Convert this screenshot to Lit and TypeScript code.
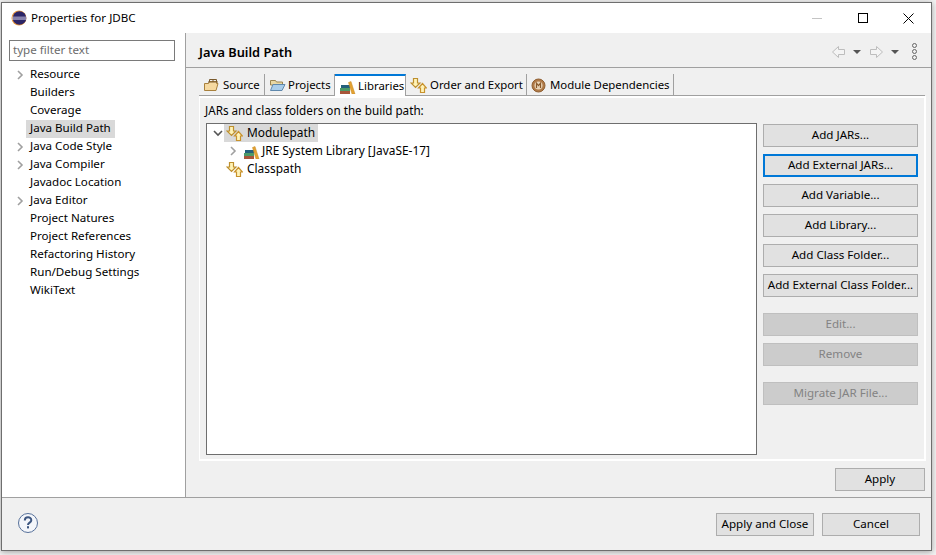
import { LitElement, html, css, svg } from 'lit';
import { customElement } from 'lit/decorators.js';

const chevronRight = html`<svg class="chev" width="10" height="10" viewBox="0 0 10 10"><path d="M3 1l4 4-4 4" fill="none" stroke="#a0a0a0" stroke-width="1.6"/></svg>`;
const chevronDown = html`<svg class="chev" width="10" height="10" viewBox="0 0 10 10"><path d="M1 3l4 4 4-4" fill="none" stroke="#555" stroke-width="1.6"/></svg>`;

const pathIcon = html`<svg class="icon" width="17" height="17" viewBox="0 0 17 17">
  <path d="M3.500 1.500h4v4.500h2.500l-4.500 4.500-4.500-4.500h2.500z" fill="#fff3b8" stroke="#bd8f2e" stroke-width="1.200"/>
  <path d="M10.500 15.500h4v-4.500h2l-4-4.500-4 4.500h2z" fill="#fff3b8" stroke="#c8922c" stroke-width="1.200"/>
</svg>`;

const libIcon = html`<svg class="icon" width="17" height="16" viewBox="0 0 17 16">
  <rect x="1" y="13" width="10" height="3" fill="#a8563a"/>
  <rect x="1" y="10" width="10" height="3" fill="#4d9a68"/>
  <rect x="2" y="7" width="9" height="3" fill="#24607c"/>
  <path d="M9.500 4.500l2.500-1 4 12.500h-3z" fill="#e3a233" stroke="#c78a24" stroke-width=".5"/>
</svg>`;

const sourceIcon = html`<svg class="icon" width="17" height="16" viewBox="0 0 17 16">
  <path d="M1.500 6.500h4l1-2h7v2h1.500l-2 7h-11.500z" fill="#f6d9a0" stroke="#a8803c"/>
  <path d="M6.500 2.500h7M6.500 5V2.500M10 5V2.500M13.500 5V2.500M5 5h10" fill="none" stroke="#7a5a2c"/>
</svg>`;

const projectIcon = html`<svg class="icon" width="17" height="16" viewBox="0 0 17 16">
  <path d="M1.500 3.500h5l1 1.500h6v3h-12z" fill="#e8d8a4" stroke="#9a8450"/>
  <path d="M1.500 13.500l2.500-6h12l-3 6z" fill="#a9cdea" stroke="#5f88ac"/>
</svg>`;

const moduleIcon = html`<svg class="icon" width="15" height="15" viewBox="0 0 15 15">
  <circle cx="7.500" cy="7.500" r="6.500" fill="#b07a48" stroke="#8f5e30"/>
  <circle cx="7.500" cy="7.500" r="4" fill="#e8d4b8"/>
  <path d="M5.500 10V5.200l2 2.400 2-2.400V10" fill="none" stroke="#8a5a2c" stroke-width="1.200"/>
</svg>`;

const eclipseIcon = html`<svg width="16" height="16" viewBox="0 0 16 16">
  <circle cx="8" cy="8" r="7.500" fill="#e8963c"/>
  <circle cx="8.500" cy="8" r="6.800" fill="#2c2566"/>
  <path d="M1 6.700h14.500v.9H1zM1 8.500h14.500v.9H1z" fill="#e4e0f0"/>
</svg>`;

const arrowLeft = svg`<path d="M7.500 1.500v3h6v5h-6v3l-6-5.500z" fill="#f4f4f4" stroke="#bdbdbd"/>`;
const arrowRight = svg`<path d="M6.500 1.500v3h-6v5h6v3l6-5.500z" fill="#f4f4f4" stroke="#bdbdbd"/>`;

const sideItems: { label: string; arrow?: boolean; selected?: boolean }[] = [
  { label: 'Resource', arrow: true },
  { label: 'Builders' },
  { label: 'Coverage' },
  { label: 'Java Build Path', selected: true },
  { label: 'Java Code Style', arrow: true },
  { label: 'Java Compiler', arrow: true },
  { label: 'Javadoc Location' },
  { label: 'Java Editor', arrow: true },
  { label: 'Project Natures' },
  { label: 'Project References' },
  { label: 'Refactoring History' },
  { label: 'Run/Debug Settings' },
  { label: 'WikiText' },
];

const tabs = [
  { label: 'Source', icon: sourceIcon, width: 66, gap: 3 },
  { label: 'Projects', icon: projectIcon, width: 70, gap: 2 },
  { label: 'Libraries', icon: libIcon, width: 71, gap: 2, active: true },
  { label: 'Order and Export', icon: pathIcon, width: 121, gap: 3 },
  { label: 'Module Dependencies', icon: moduleIcon, width: 147, gap: 4 },
];

const buttonGroups: { label: string; focus?: boolean; disabled?: boolean }[][] = [
  [
    { label: 'Add JARs...' },
    { label: 'Add External JARs...', focus: true },
    { label: 'Add Variable...' },
    { label: 'Add Library...' },
    { label: 'Add Class Folder...' },
    { label: 'Add External Class Folder...' },
  ],
  [
    { label: 'Edit...', disabled: true },
    { label: 'Remove', disabled: true },
  ],
  [{ label: 'Migrate JAR File...', disabled: true }],
];

@customElement('app-root')
export class AppRoot extends LitElement {
  static override styles = css`
    :host {
      display: block;
      width: 936px;
      height: 555px;
      box-sizing: border-box;
      padding: 2px 4px 4px 1px;
      background: #f3f3f3;
      overflow: hidden;
      font: 11.6px/16px 'Noto Sans', sans-serif;
      color: #000;
    }

    .window {
      height: 100%;
      box-sizing: border-box;
      display: flex;
      flex-direction: column;
      border: 1px solid #6e6e6e;
      background: #fff;
      box-shadow: 0 1px 6px rgba(0, 0, 0, 0.35);
    }

    .icon { flex: none; }

    .titlebar {
      height: 30px;
      flex: none;
      display: flex;
      align-items: center;
      padding-left: 9px;
      gap: 4px;
    }

    .titlebar .grow { flex: 1; }

    .win-btns {
      display: flex;
      height: 30px;
    }

    .win-btn {
      width: 45px;
      display: flex;
      align-items: center;
      justify-content: center;
    }

    .win-btn.max { width: 47px; }

    .body {
      flex: 1;
      min-height: 0;
      display: flex;
    }

    .side {
      width: 184px;
      flex: none;
      box-sizing: border-box;
      border-right: 1px solid #a0a0a0;
      background: #fff;
      padding: 7px 0 0 7px;
    }

    .filter {
      width: 166px;
      height: 21px;
      box-sizing: border-box;
      border: 1px solid #7a7a7a;
      padding-left: 3px;
      line-height: 18px;
      color: #6d6d6d;
      margin-bottom: 5px;
    }

    .side-row {
      height: 18px;
      display: flex;
      align-items: center;
    }

    .side-row .arrow {
      width: 17px;
      flex: none;
      display: flex;
      padding-left: 6px;
      box-sizing: border-box;
    }

    .side-row .arrow .chev { flex: none; }

    .side-row span {
      padding: 0 4px 2px;
      line-height: 16px;
      white-space: nowrap;
    }

    .side-row .sel { background: #d9d9d9; }

    .main {
      flex: 1;
      min-width: 0;
      display: flex;
      flex-direction: column;
      background: #f0f0f0;
    }

    .header {
      height: 35px;
      flex: none;
      box-sizing: border-box;
      border-bottom: 1px solid #a0a0a0;
      display: flex;
      align-items: center;
      padding: 3px 14px 0 13px;
    }

    .header b {
      flex: 1;
      font-size: 12.8px;
      font-weight: 600;
    }

    .nav {
      display: flex;
      align-items: center;
    }

    .drop {
      width: 0;
      height: 0;
      margin: 0 9px 0 7px;
      border: 4px solid transparent;
      border-top: 4px solid #555;
      border-bottom: 0;
    }

    .dots {
      display: flex;
      flex-direction: column;
      gap: 1px;
      margin-left: 4px;
    }

    .dots i {
      width: 3px;
      height: 3px;
      border: 1px solid #666;
      border-radius: 50%;
    }

    .content {
      flex: 1;
      min-height: 0;
      display: flex;
      flex-direction: column;
      padding: 6px 5px 0 13px;
    }

    .tabs {
      display: flex;
      height: 21px;
      flex: none;
      border-bottom: 1px solid #a0a0a0;
      margin-right: 1px;
      font-size: 11.4px;
    }

    .tab {
      height: 21px;
      flex: none;
      box-sizing: border-box;
      display: flex;
      align-items: center;
      padding-left: 4px;
      padding-top: 1px;
      border-right: 1px solid #a0a0a0;
      white-space: nowrap;
    }

    .tab.active {
      height: 22px;
      background: #fff;
      border-top: 2px solid #0078d7;
      padding-top: 0;
      padding-bottom: 1px;
    }

    .panel {
      flex: 1;
      min-height: 0;
      border: solid #fff;
      border-width: 2px 2px 2px 1px;
      display: flex;
      gap: 6px;
      padding: 3px 6px 4px 5px;
      background: #f0f0f0;
    }

    .tree-wrap {
      flex: 1;
      min-width: 0;
      display: flex;
      flex-direction: column;
    }

    .caption {
      height: 22px;
      flex: none;
      line-height: 18px;
      font-size: 11.7px;
    }

    .tree {
      flex: 1;
      margin-left: 1px;
      border: 1px solid #6e6e6e;
      background: #fff;
      font-size: 11.9px;
    }

    .tree-row {
      height: 18px;
      display: flex;
      align-items: center;
      white-space: nowrap;
    }

    .tree-row span { padding-bottom: 2px; }
    .tree-row .chev { flex: none; }
    .tree-row .mark { display: flex; align-items: center; height: 18px; padding: 0 3px 0 2px; }
    .tree-row.selected .mark { background: #d9d9d9; }
    .tree-row .chev-cell { width: 10px; flex: none; display: flex; margin-right: 1px; }
    .level0 { padding-left: 6px; }
    .level1 { padding-left: 21px; }
    .level0 .icon { margin-right: 4px; }
    .level1 .icon { margin: 0 2px 0 4px; }

    .buttons {
      width: 155px;
      flex: none;
      display: flex;
      flex-direction: column;
      gap: 16px;
      padding-top: 23px;
    }

    .group {
      display: flex;
      flex-direction: column;
      gap: 7px;
    }

    button {
      font: inherit;
      color: #000;
      height: 23px;
      box-sizing: border-box;
      padding: 0 0 2px;
      border: 1px solid #adadad;
      background: #e1e1e1;
      white-space: nowrap;
    }

    button.focus {
      border: 2px solid #0078d7;
    }

    button[disabled] {
      background: #cccccc;
      border-color: #bfbfbf;
      color: #838383;
    }

    .apply-row {
      height: 36px;
      flex: none;
      display: flex;
      justify-content: flex-end;
      padding: 7px 0 0;
      box-sizing: border-box;
    }

    .apply-row button {
      width: 90px;
      margin-right: 1px;
    }

    .footer {
      height: 53px;
      flex: none;
      box-sizing: border-box;
      border-top: 1px solid #a0a0a0;
      background: #f0f0f0;
      display: flex;
      align-items: center;
      padding: 1px 11px 0 15px;
      gap: 8px;
    }

    .footer .help { flex: 1; display: flex; margin-top: -3px; }
    .footer button { width: 98px; }
  `;

  override render() {
    return html`
      <div class="window">
        <div class="titlebar">
          ${eclipseIcon}
          <span>Properties for JDBC</span>
          <div class="grow"></div>
          <div class="win-btns">
            <div class="win-btn"><svg width="10" height="10" viewBox="0 0 10 10"><path d="M0 5.500h10" stroke="#c4c4c4"/></svg></div>
            <div class="win-btn max"><svg width="10" height="10" viewBox="0 0 10 10"><rect x=".5" y=".5" width="9" height="9" fill="none" stroke="#000"/></svg></div>
            <div class="win-btn"><svg width="11" height="11" viewBox="0 0 11 11"><path d="M.5.500l10 10M10.500.500l-10 10" stroke="#000"/></svg></div>
          </div>
        </div>
        <div class="body">
          <div class="side">
            <div class="filter">type filter text</div>
            ${sideItems.map(
              (item) => html`
                <div class="side-row">
                  <div class="arrow">${item.arrow ? chevronRight : ''}</div>
                  <span class=${item.selected ? 'sel' : ''}>${item.label}</span>
                </div>
              `
            )}
          </div>
          <div class="main">
            <div class="header">
              <b>Java Build Path</b>
              <div class="nav">
                <svg width="15" height="14" viewBox="0 0 15 14">${arrowLeft}</svg>
                <div class="drop"></div>
                <svg width="14" height="14" viewBox="0 0 14 14">${arrowRight}</svg>
                <div class="drop"></div>
                <div class="dots"><i></i><i></i><i></i></div>
              </div>
            </div>
            <div class="content">
              <div class="tabs">
                ${tabs.map(
                  (t) => html`
                    <div class="tab ${t.active ? 'active' : ''}" style="width:${t.width}px;gap:${t.gap}px">${t.icon}<span>${t.label}</span></div>
                  `
                )}
              </div>
              <div class="panel">
                <div class="tree-wrap">
                  <div class="caption">JARs and class folders on the build path:</div>
                  <div class="tree">
                    <div class="tree-row level0 selected">
                      <div class="chev-cell">${chevronDown}</div>
                      <div class="mark">${pathIcon}<span>Modulepath</span></div>
                    </div>
                    <div class="tree-row level1">
                      <div class="chev-cell">${chevronRight}</div>
                      ${libIcon}<span>JRE System Library [JavaSE-17]</span>
                    </div>
                    <div class="tree-row level0">
                      <div class="chev-cell"></div>
                      <div class="mark">${pathIcon}<span>Classpath</span></div>
                    </div>
                  </div>
                </div>
                <div class="buttons">
                  ${buttonGroups.map(
                    (group) => html`
                      <div class="group">
                        ${group.map(
                          (b) => html`<button class=${b.focus ? 'focus' : ''} ?disabled=${b.disabled}>${b.label}</button>`
                        )}
                      </div>
                    `
                  )}
                </div>
              </div>
              <div class="apply-row"><button>Apply</button></div>
            </div>
          </div>
        </div>
        <div class="footer">
          <div class="help">
            <svg width="22" height="22" viewBox="0 0 22 22">
              <circle cx="11" cy="11" r="9.500" fill="#f4f6fa" stroke="#56709a"/>
              <path d="M7.800 8.500c0-4.200 6.500-4.200 6.500-.3 0 2.400-3.300 2.500-3.300 4.800" fill="none" stroke="#3d5680" stroke-width="2"/>
              <rect x="10" y="14.200" width="2" height="2.200" fill="#3d5680"/>
            </svg>
          </div>
          <button>Apply and Close</button>
          <button>Cancel</button>
        </div>
      </div>
    `;
  }
}
